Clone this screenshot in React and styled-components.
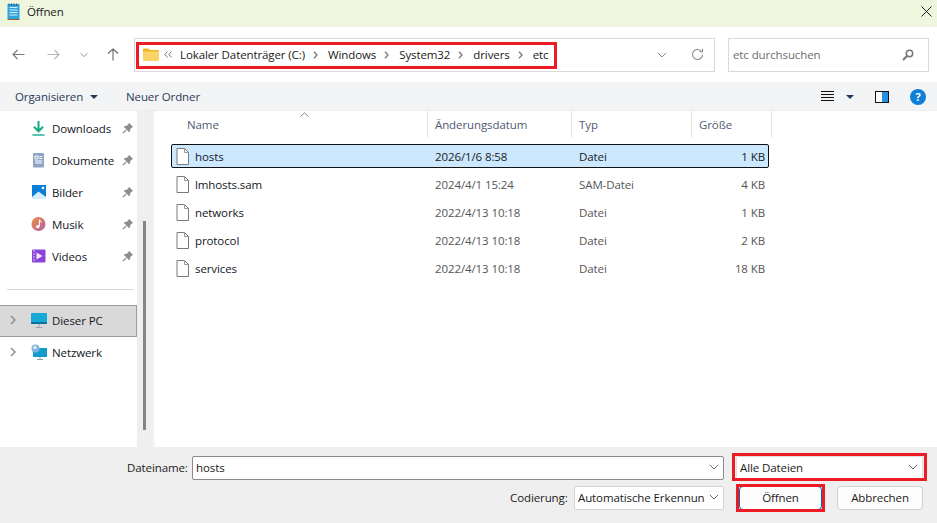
import React from "react";
import styled, { createGlobalStyle } from "styled-components";

const GlobalStyle = createGlobalStyle`
  html, body {
    margin: 0;
    padding: 0;
    background: #fff;
  }
  * {
    box-sizing: border-box;
  }
`;

const Dialog = styled.div`
  width: 937px;
  height: 523px;
  display: flex;
  flex-direction: column;
  overflow: hidden;
  font-family: "Open Sans", "Noto Sans", sans-serif;
  font-size: 11.5px;
  letter-spacing: -0.1px;
  color: #1a1a1a;
  background: #fff;
`;

const TitleBar = styled.div`
  height: 27px;
  flex: none;
  display: flex;
  align-items: center;
  padding: 0 5px 5px 7px;
  gap: 7px;
  background: #eef7de;
`;

const TitleText = styled.span`
  flex: 1;
`;

const NavBar = styled.div`
  height: 55px;
  flex: none;
  display: flex;
  align-items: center;
  padding: 0 8px 0 12px;
`;

const NavButtons = styled.div`
  width: 122px;
  flex: none;
  display: flex;
  align-items: center;
`;

const NavSlot = styled.div`
  display: flex;
  margin-left: ${(p) => p.$left}px;
`;

const AddressBar = styled.div`
  position: relative;
  width: 581px;
  height: 34px;
  flex: none;
  display: flex;
  align-items: center;
  padding: 0 10px 0 8px;
  border: 1px solid #d9d9d9;
`;

const RedFrame = styled.div`
  position: absolute;
  left: ${(p) => p.$l}px;
  top: ${(p) => p.$t}px;
  width: ${(p) => p.$w}px;
  height: ${(p) => p.$h}px;
  border: 3px solid #ed1c24;
  pointer-events: none;
`;

const Crumbs = styled.div`
  flex: 1;
  display: flex;
  align-items: center;
  white-space: nowrap;
`;

const BackMark = styled.svg`
  margin: 0 8px 0 5px;
`;

const SepMark = styled.svg`
  flex: none;
  margin: 1px 10px 0 8px;
`;

const AddressTools = styled.div`
  display: flex;
  align-items: center;
  gap: 24px;
`;

const SearchBox = styled.div`
  width: 202px;
  height: 34px;
  margin-left: 13px;
  display: flex;
  align-items: center;
  justify-content: space-between;
  padding: 0 14px 0 4px;
  border: 1px solid #d9d9d9;
  color: #6d6d6d;
`;

const Toolbar = styled.div`
  height: 28px;
  flex: none;
  display: flex;
  align-items: center;
  padding: 1px 11px 0 15px;
  background: #f3f4f6;
  color: #2b3a55;
`;

const ToolLabel = styled.span`
  width: 111px;
  display: flex;
  align-items: center;
  gap: 7px;
`;

const ToolIcons = styled.div`
  margin-left: auto;
  display: flex;
  align-items: center;
`;

const ToolIcon = styled.div`
  display: flex;
  margin-left: ${(p) => p.$left}px;
`;

const Main = styled.div`
  flex: 1;
  min-height: 0;
  display: flex;
  border-top: 1px solid #ececec;
`;

const Sidebar = styled.div`
  width: 137px;
  flex: none;
  display: flex;
  flex-direction: column;
  padding-top: 1px;
`;

const SideRow = styled.div`
  height: 32px;
  flex: none;
  display: flex;
  align-items: center;
  padding: 0 ${(p) => (p.$pin ? "3px" : "0")} 0 ${(p) => (p.$pin ? "31px" : "10px")};
  color: #14171f;
`;

const TreeRow = styled(SideRow)`
  padding-bottom: 2px;
`;

const SideLabel = styled.span`
  flex: 1;
  margin-left: ${(p) => (p.$tree ? "5px" : "6px")};
  white-space: nowrap;
`;

const Divider = styled.div`
  height: 1px;
  flex: none;
  margin: 17px 3px 15px 7px;
  background: #d8d8d8;
`;

const SelectedRow = styled(TreeRow)`
  background: #d9d9d9;
  border: 1px solid #9c9c9c;
  border-left: none;
`;

const Chevron = styled.span`
  width: 14px;
  flex: none;
  display: flex;
  margin-right: 7px;
`;

const Scroller = styled.div`
  width: 16px;
  flex: none;
  display: flex;
  justify-content: center;
  padding: 110px 0 16px;
  background: #efefef;
`;

const ScrollThumb = styled.div`
  width: 3px;
  height: 209px;
  margin-right: 1px;
  background: #858585;
`;

const ListPane = styled.div`
  flex: 1;
  display: flex;
  flex-direction: column;
  border-left: 2px solid #f8f8f8;
`;

const HeaderRow = styled.div`
  position: relative;
  height: 31px;
  flex: none;
  display: grid;
  grid-template-columns: 273px 144px 120px 80px;
  align-items: start;
`;

const HeaderCell = styled.div`
  display: flex;
  align-items: center;
  height: 27px;
  padding-left: ${(p) => p.$pad}px;
  border-right: 1px solid #e6e6e6;
  color: #4f5b74;
`;

const SortArrow = styled.svg`
  position: absolute;
  left: 145px;
  top: 1px;
`;

const FileRows = styled.div`
  display: flex;
  flex-direction: column;
  padding: 2px 0 0 16px;
`;

const FileRow = styled.div`
  width: 598px;
  height: ${(p) => (p.$active ? "24px" : "28px")};
  margin-bottom: ${(p) => (p.$active ? "2px" : "0")};
  display: grid;
  grid-template-columns: 263px 144px 120px 66px;
  align-items: center;
  border: 1px solid ${(p) => (p.$active ? "#111" : "transparent")};
  border-radius: 2px;
  background: ${(p) => (p.$active ? "#cce8ff" : "transparent")};
`;

const NameCell = styled.div`
  display: flex;
  align-items: center;
  gap: 6px;
  padding-left: 4px;
  color: #14171f;
`;

const Cell = styled.div`
  color: ${(p) => (p.$active ? "#1a1a1a" : "#555")};
`;

const SizeCell = styled(Cell)`
  text-align: right;
`;

const Footer = styled.div`
  height: 76px;
  flex: none;
  display: flex;
  flex-direction: column;
  gap: 6px;
  padding-top: 9px;
  background: #efefef;
`;

const FooterRow = styled.div`
  height: 24px;
  display: flex;
  align-items: center;
`;

const FieldLabel = styled.label`
  width: ${(p) => p.$w}px;
  margin-left: ${(p) => p.$left}px;
  margin-right: 5px;
  padding-bottom: 2px;
  white-space: nowrap;
`;

const TextField = styled.div`
  position: relative;
  width: ${(p) => p.$w}px;
  height: 24px;
  flex: none;
  display: flex;
  align-items: center;
  justify-content: space-between;
  padding: 0 4px 2px 3px;
  background: #fff;
  border: 1px solid ${(p) => (p.$soft ? "#d4d4d4" : "#8a8a8a")};
  border-radius: 2px;
  white-space: nowrap;
`;

const FileType = styled(TextField)`
  margin-left: 12px;
  border-color: #ddd;
`;

const Button = styled.button`
  position: relative;
  width: ${(p) => p.$w}px;
  height: 24px;
  margin-left: 15px;
  padding: 0 0 2px;
  font: inherit;
  letter-spacing: inherit;
  color: #1a1a1a;
  background: #fdfdfd;
  border: 1px solid ${(p) => (p.$primary ? "#0067c0" : "#d0d0d0")};
  border-radius: 4px;
`;

const FileIcon = () => (
  <svg width="13" height="17" viewBox="0 0 13 17">
    <path d="M1 .5h7.500L12.500 4.500V16.500H1z" fill="#fff" stroke="#7a7a7a" />
    <path d="M8.500 .5V4.500H12.500" fill="none" stroke="#9a9a9a" />
  </svg>
);

const Pin = () => (
  <svg width="12" height="12" viewBox="0 0 12 12">
    <path d="M7 .8 11.200 5 9.800 5.600 8.200 7.200 8 9.500 6.900 10 2 5.100 2.500 4 4.800 3.800 6.400 2.200z" fill="#8d8d8d" />
    <path d="M4 8 1 11" stroke="#8d8d8d" strokeWidth="1.200" />
  </svg>
);

const Chev = ({ color = "#666", w = 10 }) => (
  <svg width={w} height="6" viewBox="0 0 10 6">
    <path d="M.8.8 5 5l4.200-4.200" fill="none" stroke={color} strokeWidth="1" />
  </svg>
);

const Sep = () => (
  <SepMark width="5" height="8" viewBox="0 0 5 8">
    <path d="M1 .8 4 4 1 7.200" fill="none" stroke="#777" strokeWidth="1.300" />
  </SepMark>
);

const TreeArrow = () => (
  <Chevron>
    <svg width="6" height="10" viewBox="0 0 6 10">
      <path d="M1 1l4 4-4 4" fill="none" stroke="#8a8a8a" strokeWidth="1.400" />
    </svg>
  </Chevron>
);

const sideItems = [
  {
    name: "Downloads",
    icon: (
      <svg width="15" height="16" viewBox="0 0 15 16">
        <path d="M7.500 1v10M3 6.800l4.500 4.500L12 6.800" fill="none" stroke="#17a883" strokeWidth="2" />
        <path d="M1.500 15h12" stroke="#1fb597" strokeWidth="1.500" />
      </svg>
    ),
  },
  {
    name: "Dokumente",
    icon: (
      <svg width="15" height="16" viewBox="0 0 15 16">
        <rect x="2" y="1" width="11" height="14.500" rx="1" fill="#8ea4c4" />
        <path d="M4 4h3v3H4zM8.300 4.500h3M8.300 6.500h3M4 9h7.300M4 11h7.300" stroke="#fff" fill="none" />
      </svg>
    ),
  },
  {
    name: "Bilder",
    icon: (
      <svg width="15" height="16" viewBox="0 0 15 16">
        <rect x="1" y="1" width="14" height="14" fill="#0a7fd8" />
        <path d="M1 13 7.500 7.500 15 13v2H1z" fill="#d8ecfb" />
        <circle cx="12" cy="4" r="1.300" fill="#fff" />
      </svg>
    ),
  },
  {
    name: "Musik",
    icon: (
      <svg width="15" height="16" viewBox="0 0 16 16">
        <defs>
          <linearGradient id="mus" x1="0" y1="0" x2="1" y2="1">
            <stop offset="0" stopColor="#f08a3c" />
            <stop offset="1" stopColor="#b75fa8" />
          </linearGradient>
        </defs>
        <circle cx="8" cy="8" r="7.500" fill="url(#mus)" />
        <path d="M9 3.500v7.200" stroke="#fff" strokeWidth="1.300" />
        <path d="M9 3.500c.5 1.500 2 1.500 2.300 3" stroke="#fff" fill="none" />
        <circle cx="7.200" cy="10.800" r="1.800" fill="#fff" />
      </svg>
    ),
  },
  {
    name: "Videos",
    icon: (
      <svg width="15" height="16" viewBox="0 0 15 16">
        <rect x="1" y="1.500" width="13.500" height="13" rx="1" fill="#8a45d6" />
        <path d="M5.500 4.500 11.500 8l-6 3.500z" fill="#f3e8ff" />
        <path d="M2 3h2M2 6h2M2 9h2M2 12h2" stroke="#d9c2f7" strokeWidth="1" />
      </svg>
    ),
  },
];

const files = [
  { name: "hosts", date: "2026/1/6 8:58", type: "Datei", size: "1 KB", active: true },
  { name: "lmhosts.sam", date: "2024/4/1 15:24", type: "SAM-Datei", size: "4 KB" },
  { name: "networks", date: "2022/4/13 10:18", type: "Datei", size: "1 KB" },
  { name: "protocol", date: "2022/4/13 10:18", type: "Datei", size: "2 KB" },
  { name: "services", date: "2022/4/13 10:18", type: "Datei", size: "18 KB" },
];

const crumbs = ["Lokaler Datenträger (C:)", "Windows", "System32", "drivers", "etc"];

export default function App() {
  return (
    <Dialog>
      <GlobalStyle />
      <TitleBar>
        <svg width="13" height="17" viewBox="0 0 13 17">
          <rect x=".5" y="1" width="12" height="15" fill="#31a4dc" />
          <path d="M.5 16.500h12" stroke="#9a5a2c" />
          <path d="M2.500 4.500h8M2.500 7h8M2.500 9.500h8M2.500 12h8" stroke="#d6f0fb" />
          <path d="M2 .5v2M4.500 .5v2M7 .5v2M9.500 .5v2" stroke="#33526a" />
        </svg>
        <TitleText>Öffnen</TitleText>
        <svg width="11" height="11" viewBox="0 0 11 11">
          <path d="M.5.5l10 10M10.500.5l-10 10" stroke="#1a1a1a" strokeWidth="1" />
        </svg>
      </TitleBar>

      <NavBar>
        <NavButtons>
          <NavSlot $left={0}>
            <svg width="13" height="11" viewBox="0 0 13 11">
              <path d="M12.500 5.500H1M5.500 1 1 5.500 5.500 10" fill="none" stroke="#777" strokeWidth="1.100" />
            </svg>
          </NavSlot>
          <NavSlot $left={22}>
            <svg width="13" height="11" viewBox="0 0 13 11">
              <path d="M.5 5.500H12M7.500 1 12 5.500 7.500 10" fill="none" stroke="#b5b5b5" strokeWidth="1.100" />
            </svg>
          </NavSlot>
          <NavSlot $left={20}>
            <Chev color="#777" w={8} />
          </NavSlot>
          <NavSlot $left={19}>
            <svg width="12" height="13" viewBox="0 0 12 13">
              <path d="M6 12.500V1M1 5.500 6 1l5 4.500" fill="none" stroke="#666" strokeWidth="1.100" />
            </svg>
          </NavSlot>
        </NavButtons>
        <AddressBar>
          <svg width="16" height="13" viewBox="0 0 16 13">
            <path d="M0 1.500A1 1 0 0 1 1 .5h4.500L7 2h8a1 1 0 0 1 1 1v2H0z" fill="#efb324" />
            <path d="M0 3.500h16V12a1 1 0 0 1-1 1H1a1 1 0 0 1-1-1z" fill="#fbd469" />
          </svg>
          <Crumbs>
            <BackMark width="8" height="7" viewBox="0 0 8 7">
              <path d="M3.500.5.800 3.500l2.700 3M7.500.5 4.800 3.500l2.700 3" fill="none" stroke="#777" />
            </BackMark>
            {crumbs.map((c, i) => (
              <React.Fragment key={c}>
                {i > 0 && <Sep />}
                <span>{c}</span>
              </React.Fragment>
            ))}
          </Crumbs>
          <AddressTools>
            <Chev color="#888" />
            <svg width="13" height="13" viewBox="0 0 13 13">
              <path d="M11.500 6.500a5 5 0 1 1-1.500-3.600" fill="none" stroke="#888" strokeWidth="1.100" />
              <path d="M11.500.8v3h-3" fill="none" stroke="#888" strokeWidth="1.100" />
            </svg>
          </AddressTools>
          <RedFrame $l={1} $t={3} $w={421} $h={27} />
        </AddressBar>
        <SearchBox>
          <span>etc durchsuchen</span>
          <svg width="12" height="12" viewBox="0 0 12 12">
            <circle cx="7.500" cy="4.500" r="3.200" fill="none" stroke="#777" strokeWidth="1.500" />
            <path d="M5 7 1 11" stroke="#777" strokeWidth="2" />
          </svg>
        </SearchBox>
      </NavBar>

      <Toolbar>
        <ToolLabel>
          Organisieren
          <svg width="8" height="4" viewBox="0 0 8 4">
            <path d="M0 0h8L4 4z" fill="#2b3a55" />
          </svg>
        </ToolLabel>
        <span>Neuer Ordner</span>
        <ToolIcons>
          <svg width="13" height="11" viewBox="0 0 13 11">
            <path d="M0 .5h13M0 3.500h13M0 6.500h13M0 9.500h13" stroke="#111" />
          </svg>
          <ToolIcon $left={12}>
            <svg width="8" height="4" viewBox="0 0 8 4">
              <path d="M0 0h8L4 4z" fill="#24375c" />
            </svg>
          </ToolIcon>
          <ToolIcon $left={21}>
            <svg width="14" height="12" viewBox="0 0 14 12">
              <rect x=".5" y=".5" width="13" height="11" fill="#fff" stroke="#111" />
              <rect x="7" y="1" width="6" height="10" fill="#2390e0" />
            </svg>
          </ToolIcon>
          <ToolIcon $left={21}>
            <svg width="16" height="16" viewBox="0 0 16 16">
              <circle cx="8" cy="8" r="8" fill="#0f7fd8" />
              <text x="8" y="12" textAnchor="middle" fontSize="11" fontWeight="700" fontFamily="Open Sans" fill="#fff">
                ?
              </text>
            </svg>
          </ToolIcon>
        </ToolIcons>
      </Toolbar>

      <Main>
        <Sidebar>
          {sideItems.map((item) => (
            <SideRow $pin key={item.name}>
              {item.icon}
              <SideLabel>{item.name}</SideLabel>
              <Pin />
            </SideRow>
          ))}
          <Divider />
          <SelectedRow>
            <TreeArrow />
            <svg width="16" height="15" viewBox="0 0 16 15">
              <rect x="0" y="0" width="16" height="11" rx="1" fill="#17a9d8" />
              <path d="M0 9h16v1a1 1 0 0 1-1 1H1a1 1 0 0 1-1-1z" fill="#0c6f9f" />
              <path d="M8 11v3M4.500 14.500h7" stroke="#9aa7b0" />
            </svg>
            <SideLabel $tree>Dieser PC</SideLabel>
          </SelectedRow>
          <TreeRow>
            <TreeArrow />
            <svg width="16" height="16" viewBox="0 0 16 16">
              <rect x="2" y="4" width="14" height="9" fill="#129ccc" />
              <path d="M9 13v2M6 15.500h6" stroke="#8fa1ad" />
              <circle cx="4.500" cy="4.500" r="4" fill="#7fb4dd" />
              <circle cx="4" cy="3.500" r="1.800" fill="#d9edf9" />
            </svg>
            <SideLabel $tree>Netzwerk</SideLabel>
          </TreeRow>
        </Sidebar>
        <Scroller>
          <ScrollThumb />
        </Scroller>
        <ListPane>
          <HeaderRow>
            <HeaderCell $pad={32}>Name</HeaderCell>
            <HeaderCell $pad={7}>Änderungsdatum</HeaderCell>
            <HeaderCell $pad={7}>Typ</HeaderCell>
            <HeaderCell $pad={7}>Größe</HeaderCell>
            <SortArrow width="9" height="5" viewBox="0 0 9 5">
              <path d="M.5 4.500 4.500.8l4 3.700" fill="none" stroke="#888" />
            </SortArrow>
          </HeaderRow>
          <FileRows>
            {files.map((f) => (
              <FileRow $active={f.active} key={f.name}>
                <NameCell>
                  <FileIcon />
                  {f.name}
                </NameCell>
                <Cell $active={f.active}>{f.date}</Cell>
                <Cell $active={f.active}>{f.type}</Cell>
                <SizeCell $active={f.active}>{f.size}</SizeCell>
              </FileRow>
            ))}
          </FileRows>
        </ListPane>
      </Main>

      <Footer>
        <FooterRow>
          <FieldLabel $left={127} $w={60}>
            Dateiname:
          </FieldLabel>
          <TextField $w={532}>
            <span>hosts</span>
            <Chev color="#666" />
          </TextField>
          <FileType $w={187}>
            <span>Alle Dateien</span>
            <Chev color="#666" />
            <RedFrame $l={-5} $t={-4} $w={195} $h={28} />
          </FileType>
        </FooterRow>
        <FooterRow>
          <FieldLabel $left={510} $w={59}>
            Codierung:
          </FieldLabel>
          <TextField $w={150} $soft>
            <span>Automatische Erkennun</span>
            <Chev color="#666" />
          </TextField>
          <Button $primary $w={83}>
            Öffnen
            <RedFrame $l={-4} $t={-3} $w={89} $h={28} />
          </Button>
          <Button $w={86}>Abbrechen</Button>
        </FooterRow>
      </Footer>
    </Dialog>
  );
}
